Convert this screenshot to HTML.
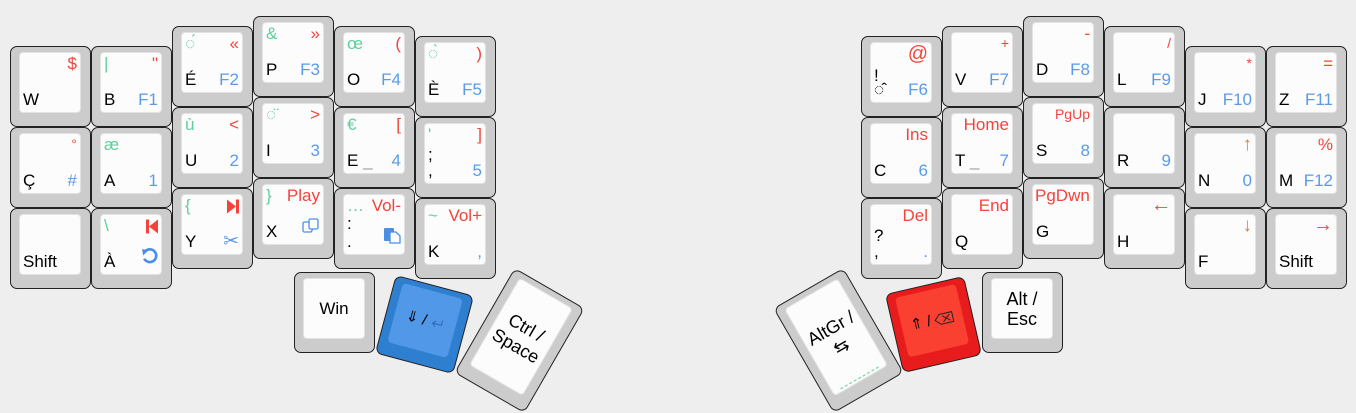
<!DOCTYPE html>
<html><head><meta charset="utf-8"><style>
body{margin:0;width:1356px;height:412px;background:#eee;position:relative;overflow:hidden;font-family:"Liberation Sans",Arial,sans-serif;font-size:17px;color:#000}
.k{position:absolute;width:81px;height:81px;box-sizing:border-box;background:#ccc;border:1px solid #222;border-radius:7px}
.i{position:absolute;left:8px;top:5px;width:62px;height:61px;box-sizing:border-box;background:#fcfcfc;border:1px solid #e2e2e2;border-radius:4px}
.i span{position:absolute;white-space:nowrap;line-height:19px}
.tl{left:3px;top:1px}.tr{right:3px;top:1px}.bl{left:3px;bottom:3px}.br{right:3px;bottom:3px}.ml{left:3px;top:21px}
.g{color:#5fcf9a}.r{color:#f3443c}.b{color:#5a9be8}.o{color:#e87a30}.gr{color:#999}
.c{position:absolute;left:0;right:0;top:0;bottom:0;display:flex;align-items:center;justify-content:center;text-align:center;line-height:20px}
</style></head><body>
<!-- LEFT -->
<div class="k" style="left:10px;top:46px"><div class="i"><span class="tr r">$</span><span class="bl">W</span></div></div>
<div class="k" style="left:10px;top:127px"><div class="i"><span class="tr r" style="font-size:14px">°</span><span class="bl">Ç</span><span class="br b">#</span></div></div>
<div class="k" style="left:10px;top:208px"><div class="i"><span class="bl">Shift</span></div></div>

<div class="k" style="left:91px;top:46px"><div class="i"><span class="tl g">|</span><span class="tr r">"</span><span class="bl">B</span><span class="br b">F1</span></div></div>
<div class="k" style="left:91px;top:127px"><div class="i"><span class="tl g">æ</span><span class="bl">A</span><span class="br b">1</span></div></div>
<div class="k" style="left:91px;top:208px"><div class="i"><span class="tl g">\</span><span class="tr r" style="top:4px"><svg width="12" height="15" viewBox="0 0 12 14"><rect x="0" y="0" width="3" height="14" fill="#f3443c"/><path d="M12 0L3 7L12 14Z" fill="#f3443c"/></svg></span><span class="bl">À</span><span class="br" style="bottom:6px"><svg width="17" height="17" viewBox="0 0 16 16"><path d="M4 4A6 6 0 1 1 3 11" fill="none" stroke="#4a8fe6" stroke-width="2.5"/><path d="M1 2L7 3L2 8Z" fill="#4a8fe6"/></svg></span></div></div>

<div class="k" style="left:172px;top:26px"><div class="i"><span class="tl g">◌́</span><span class="tr r">«</span><span class="bl">É</span><span class="br b">F2</span></div></div>
<div class="k" style="left:172px;top:107px"><div class="i"><span class="tl g">ù</span><span class="tr r">&lt;</span><span class="bl">U</span><span class="br b">2</span></div></div>
<div class="k" style="left:172px;top:188px"><div class="i"><span class="tl g">{</span><span class="tr" style="top:4px"><svg width="12" height="15" viewBox="0 0 12 14"><path d="M0 0L9 7L0 14Z" fill="#f3443c"/><rect x="9" y="0" width="3" height="14" fill="#f3443c"/></svg></span><span class="bl">Y</span><span class="br b" style="font-size:19px">✂</span></div></div>

<div class="k" style="left:253px;top:16px"><div class="i"><span class="tl g">&amp;</span><span class="tr r">»</span><span class="bl">P</span><span class="br b">F3</span></div></div>
<div class="k" style="left:253px;top:97px"><div class="i"><span class="tl g">◌̈</span><span class="tr r">&gt;</span><span class="bl">I</span><span class="br b">3</span></div></div>
<div class="k" style="left:253px;top:178px"><div class="i"><span class="tl g">}</span><span class="tr r">Play</span><span class="bl">X</span><span class="br" style="bottom:6px"><svg width="18" height="16" viewBox="0 0 18 16"><rect x="1" y="4" width="9" height="10" rx="1.5" fill="#fff" stroke="#4a8fe6" stroke-width="1.3"/><rect x="7" y="1" width="9" height="10" rx="1.5" fill="#fff" stroke="#4a8fe6" stroke-width="1.3"/></svg></span></div></div>

<div class="k" style="left:334px;top:26px"><div class="i"><span class="tl g">œ</span><span class="tr r">(</span><span class="bl">O</span><span class="br b">F4</span></div></div>
<div class="k" style="left:334px;top:107px"><div class="i"><span class="tl g">€</span><span class="tr r">[</span><span class="bl">E <span class="gr" style="position:static">_</span></span><span class="br b">4</span></div></div>
<div class="k" style="left:334px;top:188px"><div class="i"><span class="tl g">…</span><span class="tr r">Vol-</span><span class="ml" style="top:19px">:</span><span class="bl">.</span><span class="br" style="bottom:6px"><svg width="18" height="17" viewBox="0 0 18 17"><rect x="1" y="1" width="10" height="13" rx="1" fill="#4a8fe6"/><path d="M7 5H13L17 9V16H7Z" fill="#fff" stroke="#4a8fe6" stroke-width="1.3"/></svg></span></div></div>

<div class="k" style="left:415px;top:36px"><div class="i"><span class="tl g">◌̀</span><span class="tr r">)</span><span class="bl">È</span><span class="br b">F5</span></div></div>
<div class="k" style="left:415px;top:117px"><div class="i"><span class="tl g">'</span><span class="tr r">]</span><span class="ml">;</span><span class="bl">,</span><span class="br b">5</span></div></div>
<div class="k" style="left:415px;top:198px"><div class="i"><span class="tl g">~</span><span class="tr r">Vol+</span><span class="bl">K</span><span class="br b">,</span></div></div>

<!-- left thumbs -->
<div class="k" style="left:294px;top:272px"><div class="i"><div class="c">Win</div></div></div>
<div class="k" style="left:384px;top:284px;background:#2f7fd0;transform:rotate(15deg)"><div class="i" style="background:#5198e8;border-color:#5198e8"><div class="c" style="font-size:15px">⇓ / <svg width="14" height="12" viewBox="0 0 14 12" style="margin-left:4px"><path d="M12 1V6H3M6 3L3 6L6 9" fill="none" stroke="#2f6fc0" stroke-width="1.2"/></svg></div></div></div>
<div class="k" style="left:479px;top:280px;width:81px;height:121px;transform:rotate(30deg)"><div class="i" style="height:101px"><div class="c" style="font-size:18px;line-height:21px">Ctrl /<br>Space</div></div></div>

<!-- RIGHT -->
<div class="k" style="left:861px;top:36px"><div class="i"><span class="tr r" style="font-size:20px;top:2px">@</span><span class="ml" style="top:23px">!</span><span class="bl">◌̂</span><span class="br b">F6</span></div></div>
<div class="k" style="left:861px;top:117px"><div class="i"><span class="tr r">Ins</span><span class="bl">C</span><span class="br b">6</span></div></div>
<div class="k" style="left:861px;top:198px"><div class="i"><span class="tr r">Del</span><span class="ml">?</span><span class="bl">,</span><span class="br b">.</span></div></div>

<div class="k" style="left:942px;top:26px"><div class="i"><span class="tr r" style="font-size:14px">+</span><span class="bl">V</span><span class="br b">F7</span></div></div>
<div class="k" style="left:942px;top:107px"><div class="i"><span class="tr r">Home</span><span class="bl">T <span class="gr" style="position:static">_</span></span><span class="br b">7</span></div></div>
<div class="k" style="left:942px;top:188px"><div class="i"><span class="tr r">End</span><span class="bl">Q</span></div></div>

<div class="k" style="left:1023px;top:16px"><div class="i"><span class="tr r">-</span><span class="bl">D</span><span class="br b">F8</span></div></div>
<div class="k" style="left:1023px;top:97px"><div class="i"><span class="tr r" style="font-size:14px">PgUp</span><span class="bl">S</span><span class="br b">8</span></div></div>
<div class="k" style="left:1023px;top:178px"><div class="i"><span class="tl r" style="left:2px">PgDwn</span><span class="bl">G</span></div></div>

<div class="k" style="left:1104px;top:26px"><div class="i"><span class="tr r" style="font-size:14px">/</span><span class="bl">L</span><span class="br b">F9</span></div></div>
<div class="k" style="left:1104px;top:107px"><div class="i"><span class="bl">R</span><span class="br b">9</span></div></div>
<div class="k" style="left:1104px;top:188px"><div class="i"><span class="tr r" style="font-size:20px">←</span><span class="bl">H</span></div></div>

<div class="k" style="left:1185px;top:46px"><div class="i"><span class="tr r" style="font-size:14px">*</span><span class="bl">J</span><span class="br b">F10</span></div></div>
<div class="k" style="left:1185px;top:127px"><div class="i"><span class="tr o" style="font-size:19px">↑</span><span class="bl">N</span><span class="br b">0</span></div></div>
<div class="k" style="left:1185px;top:208px"><div class="i"><span class="tr o" style="font-size:19px">↓</span><span class="bl">F</span></div></div>

<div class="k" style="left:1266px;top:46px"><div class="i"><span class="tr r">=</span><span class="bl">Z</span><span class="br b">F11</span></div></div>
<div class="k" style="left:1266px;top:127px"><div class="i"><span class="tr r">%</span><span class="bl">M</span><span class="br b">F12</span></div></div>
<div class="k" style="left:1266px;top:208px"><div class="i"><span class="tr r" style="font-size:20px">→</span><span class="bl">Shift</span></div></div>

<!-- right thumbs -->
<div class="k" style="left:982px;top:272px"><div class="i"><div class="c" style="font-size:18px;line-height:20px">Alt /<br>Esc</div></div></div>
<div class="k" style="left:893px;top:284px;background:#e81c1c;transform:rotate(-13deg)"><div class="i" style="background:#fa4030;border-color:#fa4030"><div class="c" style="font-size:15px">⇑ / <svg width="20" height="12" viewBox="0 0 20 12" style="margin-left:3px"><path d="M1 6L6 1H19V11H6Z M9 3L16 9 M16 3L9 9" fill="none" stroke="#222" stroke-width="1"/></svg></div></div></div>
<div class="k" style="left:798px;top:280px;width:81px;height:121px;transform:rotate(-30deg)"><div class="i" style="height:101px"><div class="c" style="font-size:18px;line-height:21px">AltGr /<br>⇆</div><div style="position:absolute;left:8px;right:8px;bottom:2px;border-top:1px dashed #5fcf9a"></div></div></div>
</body></html>
